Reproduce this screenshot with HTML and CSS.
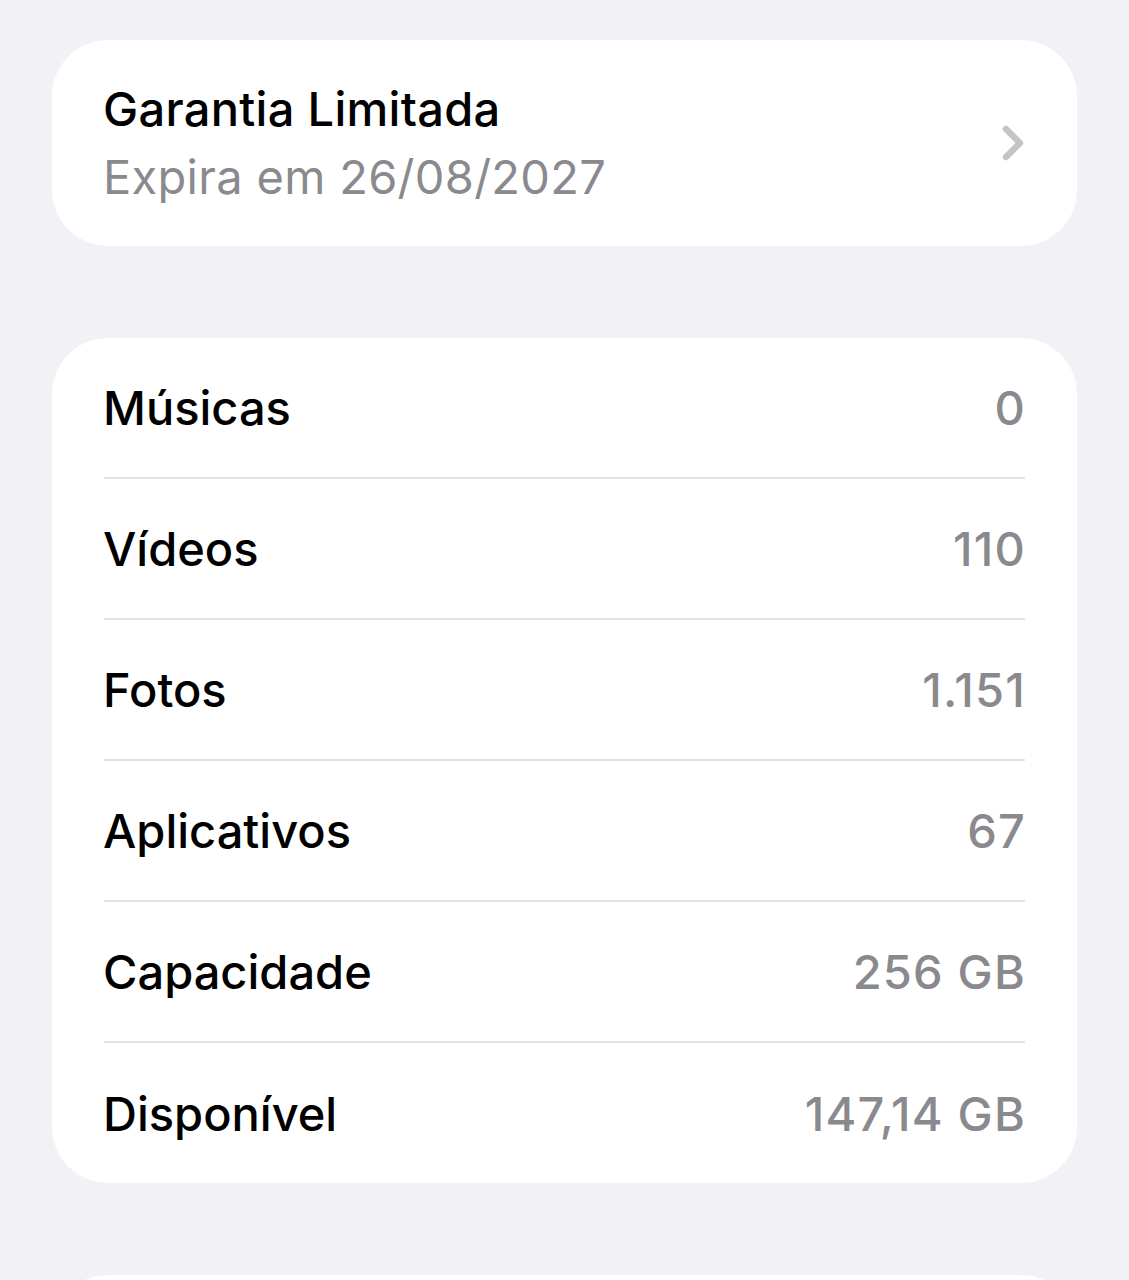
FILE: index.html
```html
<!DOCTYPE html>
<html lang="pt-BR">
<head>
    <meta charset="UTF-8">
    <meta name="viewport" content="width=device-width, initial-scale=1.0">
    <title>Sobre</title>
    <link rel="stylesheet" href="styles.css">
</head>
<body>
    <div class="page">
        <a class="card warranty" href="#">
            <div class="warranty-text">
                <div class="title">Garantia Limitada</div>
                <div class="subtitle">Expira em 26/08/2027</div>
            </div>
            <svg class="chevron" width="24" height="36" viewBox="0 0 24 36">
                <path d="M5 4 L19 18 L5 32" fill="none" stroke="#c4c4c7" stroke-width="6.5" stroke-linecap="round" stroke-linejoin="round"/>
            </svg>
        </a>

        <div class="card list">
            <div class="row"><span class="label">Músicas</span><span class="value">0</span></div>
            <div class="row"><span class="label">Vídeos</span><span class="value">110</span></div>
            <div class="row"><span class="label">Fotos</span><span class="value">1.151</span></div>
            <div class="row"><span class="label">Aplicativos</span><span class="value">67</span></div>
            <div class="row"><span class="label">Capacidade</span><span class="value">256 GB</span></div>
            <div class="row"><span class="label">Disponível</span><span class="value">147,14 GB</span></div>
        </div>

        <div class="card next"></div>
    </div>
</body>
</html>
```

FILE: styles.css
```css
body {
    margin: 0;
    background-color: #f1f1f6;
    font-family: Inter, "Noto Sans", sans-serif;
    color: #000;
}
.page {
    padding: 40px 52px 0;
    display: flex;
    flex-direction: column;
    gap: 92px;
    height: 1280px;
    box-sizing: border-box;
    overflow: hidden;
}
.card {
    background-color: #fff;
    border-radius: 56px;
}
.warranty {
    display: flex;
    align-items: center;
    justify-content: space-between;
    padding: 35px 52px 35px 51px;
    text-decoration: none;
    color: inherit;
}
.warranty-text {
    font-size: 47px;
    line-height: 68px;
    letter-spacing: 0.3px;
}
.title {
    font-weight: 500;
}
.subtitle {
    color: #8a8a8e;
}
.list {
    padding: 0 52px;
}
.row {
    display: flex;
    justify-content: space-between;
    align-items: center;
    height: 139px;
    font-size: 47px;
    border-bottom: 2px solid #e3e3e6;
}
.row:last-child {
    border-bottom: none;
    height: 140px;
}
.label {
    font-weight: 500;
    margin-left: -1px;
}
.value {
    color: #8a8a8e;
    font-weight: 500;
    letter-spacing: 1.2px;
    margin-right: -1px;
}
.next {
    height: 200px;
    flex-shrink: 0;
}
```
